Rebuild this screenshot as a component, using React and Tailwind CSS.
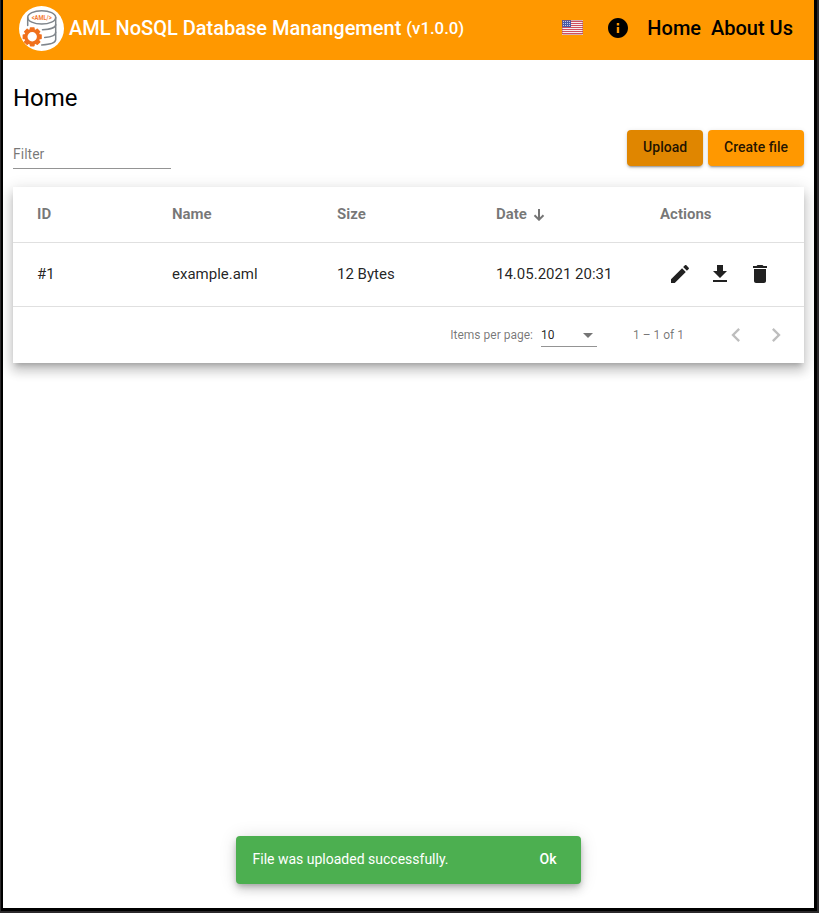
const Icon = ({ d, className = 'size-6' }) => (
  <svg viewBox="0 0 24 24" fill="currentColor" className={`block shrink-0 ${className}`}>
    <path d={d} />
  </svg>
);

const EDIT = 'M3 17.25V21h3.75L17.81 9.94l-3.75-3.75L3 17.25zM20.71 7.04c.39-.39.39-1.02 0-1.41l-2.34-2.34c-.39-.39-1.02-.39-1.41 0l-1.83 1.83 3.75 3.75 1.83-1.83z';
const DOWNLOAD = 'M19 9h-4V3H9v6H5l7 7 7-7zM5 18v2h14v-2H5z';
const DELETE = 'M6 19c0 1.1.9 2 2 2h8c1.1 0 2-.9 2-2V7H6v12zM19 4h-3.5l-1-1h-5l-1 1H5v2h14V4z';
const INFO = 'M12 2C6.48 2 2 6.48 2 12s4.48 10 10 10 10-4.48 10-10S17.52 2 12 2zm1.2 15h-2.4v-6h2.4v6zm0-7.6h-2.4V7h2.4v2.4z';
const PREV = 'M15.41 7.41L14 6l-6 6 6 6 1.41-1.41L10.83 12z';
const NEXT = 'M10 6L8.59 7.41 13.17 12l-4.58 4.59L10 18l6-6z';

const TEETH = [0, 45, 90, 135, 180, 225, 270, 315];

const Logo = () => (
  <svg viewBox="0 0 45 45" className="block size-[45px] shrink-0">
    <circle cx="22.5" cy="22.5" r="22.5" fill="#fff" />
    <g fill="none" stroke="#7f858b" strokeWidth="1.5" strokeLinecap="round">
      <ellipse cx="22.7" cy="11.4" rx="14" ry="6.7" />
      <path d="M8.7 11.5v8M36.7 11.5v22c0 3-5.5 5-14 5.4" />
      <path d="M36.7 18.5c0 3.2-6.3 5-13.2 5.2M36.7 26.3c0 3-4.5 4.8-11 5.2" />
    </g>
    <text x="22.7" y="14.2" textAnchor="middle" fontSize="7.2" fontWeight="700" fill="#f47a34" textLength="20" lengthAdjust="spacingAndGlyphs">&lt;AML/&gt;</text>
    <circle cx="13.2" cy="30.8" r="9.4" fill="#fff" />
    <g fill="#f0701c">
      {TEETH.map((a) => (
        <rect key={a} x="10.7" y="21.2" width="5" height="5" rx=".8" transform={`rotate(${a} 13.2 30.8)`} />
      ))}
    </g>
    <circle cx="13.2" cy="30.8" r="6.3" fill="#fff" stroke="#f0701c" strokeWidth="3.2" />
  </svg>
);

const Flag = () => (
  <svg viewBox="0 0 21 15" className="block h-[15px] w-[21px] shrink-0">
    <rect width="21" height="15" rx="1" fill="#f6eef0" />
    {[0, 1, 2, 3, 4, 5, 6].map((i) => (
      <rect key={i} y={i * 2 + 1} width="21" height="1" fill="#cf5060" />
    ))}
    <rect width="9" height="7" fill="#4a5aa5" />
    {[0, 1, 2].map((r) =>
      [0, 1, 2, 3].map((c) => (
        <rect key={`${r}${c}`} x={c * 2 + 1} y={r * 2 + 1} width="1" height="1" fill="#c3c9e6" />
      ))
    )}
    <rect x=".5" y=".5" width="20" height="14" rx="1" fill="none" stroke="#a0505f" strokeOpacity=".4" />
  </svg>
);

const COLS = 'grid grid-cols-[135px_165px_159px_164px_1fr] items-center border-b border-[#e0e0e0] pl-6';
const BUTTON = 'h-9 rounded px-4 pb-[2px] text-sm leading-[34px] font-medium text-black/87 shadow-[0_3px_1px_-2px_rgba(0,0,0,.2),0_2px_2px_0_rgba(0,0,0,.14),0_1px_5px_0_rgba(0,0,0,.12)]';

export default function App() {
  return (
    <div className="h-[913px] w-[819px] overflow-hidden border-r-2 border-b-2 border-l border-[#2b292b] bg-black pr-[2px] pb-[3px] pl-[2px] font-['Roboto',sans-serif] text-black">
      <div className="relative flex h-[908px] w-[811px] flex-col overflow-hidden bg-white">
        <header className="flex h-[60px] items-center bg-[#ff9800] pr-[21px] pb-[3px] pl-4 text-xl font-medium whitespace-nowrap">
          <Logo />
          <h1 className="ml-[5px] pb-[2px] text-white">
            AML NoSQL Database Manangement <span className="align-[1px] text-[16.8px] leading-none">(v1.0.0)</span>
          </h1>
          <div className="ml-auto flex items-center pb-[2px]">
            <Flag />
            <Icon d={INFO} className="ml-[22.5px] size-6" />
            <a className="ml-[17.5px]">Home</a>
            <a className="ml-[10px]">About Us</a>
          </div>
        </header>

        <main className="px-[10px]">
          <h2 className="mt-[22px] text-2xl leading-8">Home</h2>
          <div className="mt-4 flex items-start justify-between">
            <div className="mt-[15px] h-6 w-[158px] border-b border-[#949494] text-sm leading-[19px] text-black/54">Filter</div>
            <div className="flex gap-[5px]">
              <button className={`bg-[#e08600] ${BUTTON}`}>Upload</button>
              <button className={`bg-[#ff9800] ${BUTTON}`}>Create file</button>
            </div>
          </div>

          <section className="mt-[18px] w-[791px] bg-white shadow-[0_5px_5px_-3px_rgba(0,0,0,.2),0_8px_10px_1px_rgba(0,0,0,.14),0_3px_14px_2px_rgba(0,0,0,.12)]">
            <div className={`h-14 text-[15px] font-bold text-black/54 ${COLS}`}>
              <span>ID</span>
              <span>Name</span>
              <span>Size</span>
              <span className="flex items-center gap-[6px]">
                Date
                <svg viewBox="0 0 12 12" className="size-3" fill="none" stroke="currentColor" strokeWidth="2">
                  <path d="M6 0v11M1.5 6.2L6 10.7l4.5-4.5" />
                </svg>
              </span>
              <span>Actions</span>
            </div>
            <div className={`h-16 text-[15px] text-black/87 ${COLS}`}>
              <span>#1</span>
              <span>example.aml</span>
              <span>12 Bytes</span>
              <span>14.05.2021 20:31</span>
              <span className="flex gap-4 pb-[2px] pl-2">
                <Icon d={EDIT} />
                <Icon d={DOWNLOAD} />
                <Icon d={DELETE} />
              </span>
            </div>
            <div className="flex h-14 items-center justify-end pr-[14px] text-xs text-black/54">
              <span>Items per page:</span>
              <div className="mt-[2px] ml-2 flex h-[22px] w-14 items-center justify-between border-b border-[#949494] pr-1 pb-[2px] text-black/87">
                10
                <span className="mt-px border-x-[5px] border-t-[5px] border-x-transparent border-t-black/54" />
              </div>
              <span className="ml-9">1 – 1 of 1</span>
              <div className="ml-[38px] flex gap-3 text-black/26">
                <Icon d={PREV} className="size-7" />
                <Icon d={NEXT} className="size-7" />
              </div>
            </div>
          </section>
        </main>

        <div className="absolute top-[836px] left-[233px] flex h-12 w-[345px] items-center justify-between rounded bg-[#4caf50] pr-[24.5px] pb-[2px] pl-[16.5px] text-sm text-white shadow-[0_3px_5px_-1px_rgba(0,0,0,.2),0_6px_10px_0_rgba(0,0,0,.14),0_1px_18px_0_rgba(0,0,0,.12)]">
          <span>File was uploaded successfully.</span>
          <span className="font-medium">Ok</span>
        </div>
      </div>
    </div>
  );
}
